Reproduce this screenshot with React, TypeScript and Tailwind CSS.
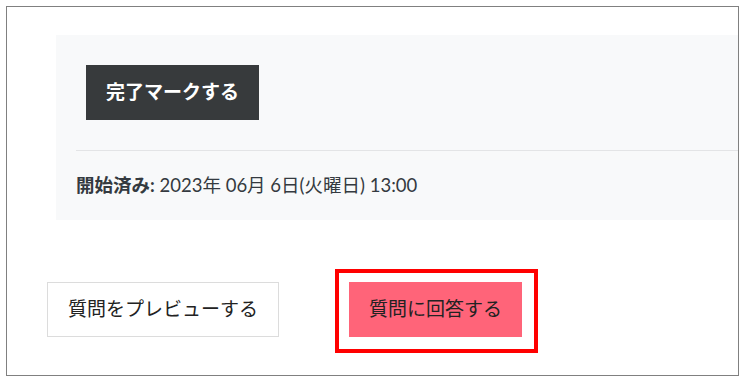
const font = { fontFamily: 'Lato, "Noto Sans CJK JP", sans-serif' };

export default function App() {
  return (
    <div className="min-h-[385px] bg-white p-[6px]" style={font}>
      <div className="relative h-[370px] w-[733px] overflow-hidden border border-[#808080] bg-white">
        <div className="ml-[49px] mt-[28px] w-[720px] bg-[#f8f9fa] pl-5 pt-[30px]">
          <div className="px-[10px]">
            <button className="flex h-[55px] w-[173px] items-center justify-center bg-[#373a3c] text-[19px] font-bold text-white">
              完了マークする
            </button>
          </div>
          <div className="mt-[30px] border-t border-[#e3e4e6] pb-[21px] pt-[21px] text-[18.5px] leading-[27px] text-[#343a40]">
            <span className="font-bold">開始済み:</span> 2023年 06月 6日(火曜日) 13:00
          </div>
        </div>

        <div className="ml-[40px] mt-[62px] flex items-center gap-[70px]">
          <button className="flex h-[55px] w-[232px] items-center justify-center border border-[#dcdcdc] bg-white text-[19px] text-[#222]">
            質問をプレビューする
          </button>
          <div className="relative">
            <button className="flex h-[55px] w-[173px] items-center justify-center bg-[#ff6479] text-[19px] text-[#222]">
              質問に回答する
            </button>
            <span className="pointer-events-none absolute -bottom-[16px] -left-[14px] -right-[16px] -top-[13px] border-4 border-[#ff0000]" />
          </div>
        </div>
      </div>
    </div>
  );
}
